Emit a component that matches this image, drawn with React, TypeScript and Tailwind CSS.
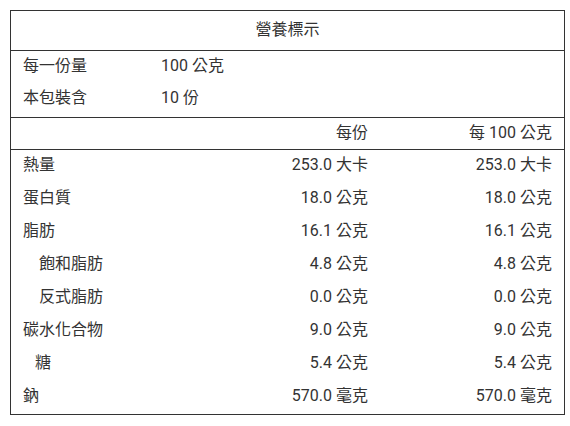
const font = { fontFamily: 'Roboto, "Noto Sans CJK TC", sans-serif' };

const rows: { label: string; indent?: string; perServing: string; per100: string }[] = [
  { label: '熱量', perServing: '253.0 大卡', per100: '253.0 大卡' },
  { label: '蛋白質', perServing: '18.0 公克', per100: '18.0 公克' },
  { label: '脂肪', perServing: '16.1 公克', per100: '16.1 公克' },
  { label: '飽和脂肪', indent: 'pl-4', perServing: '4.8 公克', per100: '4.8 公克' },
  { label: '反式脂肪', indent: 'pl-4', perServing: '0.0 公克', per100: '0.0 公克' },
  { label: '碳水化合物', perServing: '9.0 公克', per100: '9.0 公克' },
  { label: '糖', indent: 'pl-3', perServing: '5.4 公克', per100: '5.4 公克' },
  { label: '鈉', perServing: '570.0 毫克', per100: '570.0 毫克' },
];

export default function App() {
  return (
    <div className="min-h-[426px] bg-white p-[10px] text-[16px] text-[#333]" style={font}>
      <div className="w-[555px] border border-[#333]">
        <div className="flex h-[40px] items-center justify-center border-b border-[#333] pb-[1px]">營養標示</div>

        <div className="border-b border-[#333] pb-[2px]">
          <div className="flex h-[32px] items-center px-3 pb-[2px]">
            <span className="w-[138px]">每一份量</span>
            <span>100 公克</span>
          </div>
          <div className="flex h-[32px] items-center px-3 pb-[2px]">
            <span className="w-[138px]">本包裝含</span>
            <span>10 份</span>
          </div>
        </div>

        <div className="grid h-[32px] grid-cols-[1fr_184px_184px] items-center border-b border-[#333] px-3 pb-[2px]">
          <span></span>
          <span className="text-right">每份</span>
          <span className="text-right">每 100 公克</span>
        </div>

        {rows.map((row) => (
          <div key={row.label} className="grid h-[33px] grid-cols-[1fr_184px_184px] items-center px-3 pb-[3px]">
            <span className={row.indent}>{row.label}</span>
            <span className="text-right">{row.perServing}</span>
            <span className="text-right">{row.per100}</span>
          </div>
        ))}
      </div>
    </div>
  );
}
